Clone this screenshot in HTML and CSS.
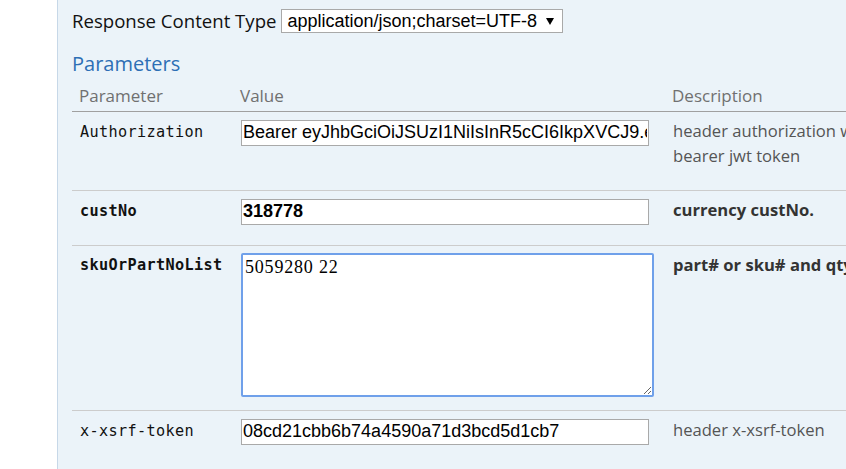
FILE: index.html
```html
<!DOCTYPE html>
<html lang="en">
<head>
<meta charset="utf-8">
<title>Parameters</title>
<link rel="stylesheet" href="styles.css">
</head>
<body>
<div class="page">
  <div class="gutter"></div>
  <section class="content">
    <div class="resp-type">
      <label class="resp-label" for="rct">Response Content Type</label>
      <span class="select-wrap">
        <select id="rct" class="select">
          <option>application/json;charset=UTF-8</option>
        </select>
        <svg class="select-arrow" width="8" height="7" viewBox="0 0 8 7"><path d="M0 0H8L4 7Z" fill="#000"/></svg>
      </span>
    </div>
    <h4 class="params-title">Parameters</h4>
    <table class="params">
      <colgroup>
        <col class="c-name">
        <col class="c-value">
        <col class="c-desc">
      </colgroup>
      <thead>
        <tr>
          <th>Parameter</th>
          <th>Value</th>
          <th>Description</th>
        </tr>
      </thead>
      <tbody>
        <tr>
          <td class="code">Authorization</td>
          <td><input class="field" type="text" value="Bearer eyJhbGciOiJSUzI1NiIsInR5cCI6IkpXVCJ9.eyJzdWIiOiIxMjM0NTY3ODkwIn0"></td>
          <td class="desc">header authorization with bearer jwt token</td>
        </tr>
        <tr>
          <td class="code req">custNo</td>
          <td><input class="field req-field" type="text" value="318778"></td>
          <td class="desc req-desc">currency custNo.</td>
        </tr>
        <tr class="tall">
          <td class="code req">skuOrPartNoList</td>
          <td><textarea class="area">5059280 22</textarea></td>
          <td class="desc req-desc">part# or sku# and qty</td>
        </tr>
        <tr>
          <td class="code">x-xsrf-token</td>
          <td><input class="field" type="text" value="08cd21cbb6b74a4590a71d3bcd5d1cb7"></td>
          <td class="desc">header x-xsrf-token</td>
        </tr>
      </tbody>
    </table>
  </section>
</div>
</body>
</html>
```
FILE: styles.css
```css
html, body {
  margin: 0;
  padding: 0;
  overflow: hidden;
  background: #ffffff;
}

.page {
  display: flex;
  width: 846px;
  height: 469px;
  overflow: hidden;
}

.gutter {
  flex: 0 0 57px;
  background: #ffffff;
}

.content {
  flex: 0 0 auto;
  width: 1000px;
  background: #ebf3f9;
  border-left: 1px solid #c7d8e8;
  padding: 9px 0 0 14px;
  font-family: "Open Sans", "Noto Sans", sans-serif;
}

.resp-type {
  display: flex;
  align-items: center;
  gap: 5px;
  height: 24px;
}

.resp-label {
  font-size: 18.6px;
  color: #111111;
  line-height: 24px;
}

.select-wrap {
  position: relative;
  display: inline-flex;
}

.select {
  appearance: none;
  -webkit-appearance: none;
  width: 282px;
  height: 24px;
  margin: 0;
  padding: 0 0 1px 5px;
  border: 1px solid #a9a9a9;
  border-radius: 0;
  background: #ffffff;
  font-family: "Liberation Sans", Arial, sans-serif;
  font-size: 18px;
  color: #000000;
}

.select-arrow {
  position: absolute;
  right: 9px;
  top: 9px;
}

.params-title {
  margin: 17px 0 0 0;
  font-size: 20px;
  font-weight: 400;
  line-height: 27px;
  color: #2d6fb5;
}

.params {
  border-collapse: collapse;
  table-layout: fixed;
  width: 833px;
}

.c-name { width: 161px; }
.c-value { width: 432px; }
.c-desc { width: 240px; }

.params th {
  text-align: left;
  font-weight: 400;
  font-size: 17px;
  color: #707070;
  padding: 7px 0 4px 7px;
  line-height: 23px;
  border-bottom: 1px solid #a0a0a0;
}

.params td {
  vertical-align: top;
  padding: 8px 0 20px 8px;
  border-bottom: 1px solid #cccccc;
}

.params td.desc {
  padding-top: 7px;
  padding-bottom: 22px;
}

.params tr.tall td {
  padding-top: 7px;
  padding-bottom: 13px;
}

.params tbody tr:last-child td {
  border-bottom: none;
}

.code {
  font-family: "DejaVu Sans Mono", "Liberation Mono", monospace;
  font-size: 15.2px;
  letter-spacing: 0.35px;
  line-height: 24px;
  color: #111111;
}

.req {
  font-weight: 700;
}

.desc {
  font-size: 16.6px;
  line-height: 24.6px;
  color: #555555;
}

.req-desc {
  font-weight: 700;
  color: #333333;
}

.field {
  display: block;
  box-sizing: border-box;
  width: 408px;
  height: 26px;
  margin: 0;
  padding: 0 1px 2px 1px;
  border: 1px solid #a9a9a9;
  border-radius: 0;
  background: #ffffff;
  font-family: "Liberation Sans", Arial, sans-serif;
  font-size: 18px;
  color: #000000;
  outline: none;
}

.req-field {
  font-weight: 700;
}

.area {
  display: block;
  box-sizing: border-box;
  width: 413px;
  height: 144px;
  margin: 0;
  padding: 2px;
  border: 2px solid #6fa0ea;
  border-radius: 2px;
  background: #ffffff;
  font-family: "Liberation Serif", "Times New Roman", serif;
  font-size: 18px;
  letter-spacing: 0.8px;
  color: #000000;
  resize: both;
  outline: none;
}
```
